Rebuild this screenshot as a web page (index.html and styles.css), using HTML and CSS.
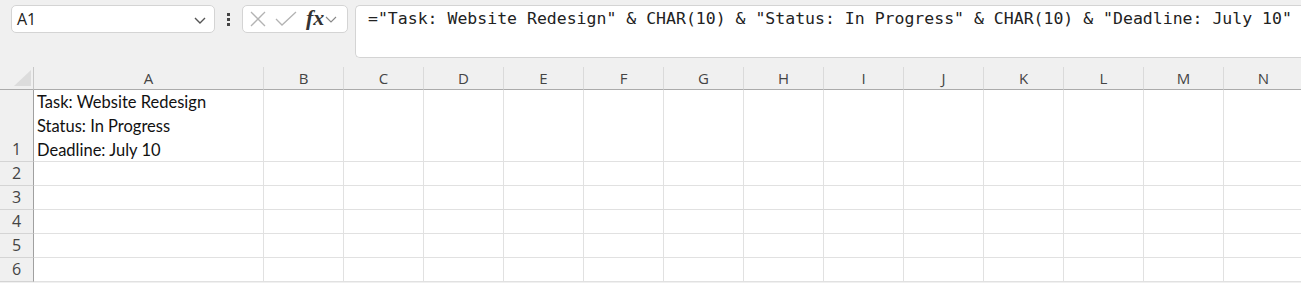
FILE: index.html
```html
<!DOCTYPE html>
<html lang="en">
<head>
    <meta charset="UTF-8">
    <title>Sheet</title>
    <link rel="stylesheet" href="styles.css">
</head>
<body>
    <div class="toolbar">
        <div class="name-box">
            <span>A1</span>
            <svg class="chevron" width="14" height="10" viewBox="0 0 14 10" fill="none" stroke="#555" stroke-width="1.4">
                <polyline points="2 3 7 8 12 3"></polyline>
            </svg>
        </div>
        <div class="dots"><i></i><i></i><i></i></div>
        <div class="func-box">
            <svg width="18" height="18" viewBox="0 0 18 18" fill="none" stroke="#b3b3b3" stroke-width="1.3">
                <line x1="2" y1="2" x2="16" y2="16"></line>
                <line x1="16" y1="2" x2="2" y2="16"></line>
            </svg>
            <svg width="22" height="16" viewBox="0 0 22 16" fill="none" stroke="#b3b3b3" stroke-width="1.3">
                <polyline points="1 8 7 14 21 1"></polyline>
            </svg>
            <span class="fx">fx</span>
            <svg class="small-chevron" width="12" height="8" viewBox="0 0 12 8" fill="none" stroke="#888" stroke-width="1.1">
                <polyline points="1 2 6 7 11 2"></polyline>
            </svg>
        </div>
        <div class="formula">="Task: Website Redesign" &amp; CHAR(10) &amp; "Status: In Progress" &amp; CHAR(10) &amp; "Deadline: July 10"</div>
    </div>

    <div class="sheet">
        <div class="corner"><div class="tri"></div></div>
        <div class="col-head">A</div>
        <div class="col-head">B</div>
        <div class="col-head">C</div>
        <div class="col-head">D</div>
        <div class="col-head">E</div>
        <div class="col-head">F</div>
        <div class="col-head">G</div>
        <div class="col-head">H</div>
        <div class="col-head">I</div>
        <div class="col-head">J</div>
        <div class="col-head">K</div>
        <div class="col-head">L</div>
        <div class="col-head">M</div>
        <div class="col-head">N</div>
    </div>
    <div id="rows"></div>

    <script>
        // build rows 1-6
        const rows = document.getElementById('rows');
        for (let r = 1; r <= 6; r++) {
            const row = document.createElement('div');
            row.className = r === 1 ? 'sheet row tall' : 'sheet row';
            let html = `<div class="row-head">${r}</div>`;
            for (let c = 0; c < 14; c++) {
                if (r === 1 && c === 0) {
                    html += `<div class="cell wrap">Task: Website Redesign<br>Status: In Progress<br>Deadline: July 10</div>`;
                } else {
                    html += `<div class="cell"></div>`;
                }
            }
            row.innerHTML = html;
            rows.appendChild(row);
        }
    </script>
</body>
</html>
```

FILE: styles.css
```css
body {
    margin: 0;
    background: #f0f0f0;
    font-family: 'Open Sans', 'Noto Sans', sans-serif;
    overflow: hidden;
}
.toolbar {
    display: flex;
    align-items: flex-start;
    height: 67px;
    padding: 5px 0 0 11px;
    box-sizing: border-box;
}
.name-box {
    width: 204px;
    height: 28px;
    box-sizing: border-box;
    background: #fff;
    border: 1px solid #d4d4d4;
    border-radius: 5px;
    display: flex;
    align-items: center;
    justify-content: space-between;
    padding: 0 7px 0 5px;
    font-size: 16px;
    color: #222;
}
.chevron {
    margin-top: 2px;
}
.dots {
    width: 27px;
    height: 28px;
    display: flex;
    flex-direction: column;
    align-items: center;
    justify-content: center;
    gap: 2px;
}
.dots i {
    width: 3px;
    height: 3px;
    background: #444;
}
.func-box {
    width: 106px;
    height: 28px;
    box-sizing: border-box;
    background: #fff;
    border: 1px solid #d4d4d4;
    border-radius: 5px;
    display: flex;
    align-items: center;
    padding: 0 4px 0 6px;
    gap: 8px;
}
.fx {
    font-family: 'Liberation Serif', serif;
    font-style: italic;
    font-weight: bold;
    font-size: 22px;
    color: #333;
    margin-left: 1px;
    line-height: 1;
    margin-top: -3px;
}
.small-chevron {
    margin-left: -7px;
}
.formula {
    flex: 1;
    margin-left: 7px;
    height: 53px;
    box-sizing: border-box;
    background: #fff;
    border: 1px solid #d4d4d4;
    border-right: none;
    border-radius: 5px 0 0 5px;
    padding: 3px 0 0 12px;
    font-family: 'DejaVu Sans Mono', monospace;
    font-size: 16.5px;
    color: #222;
    white-space: nowrap;
    overflow: hidden;
}
.sheet {
    display: grid;
    grid-template-columns: 34px 230px repeat(12, 80px) 80px;
}
.corner {
    height: 23px;
    box-sizing: border-box;
    border-right: 1px solid #c8c8c8;
    border-bottom: 1px solid #ababab;
    position: relative;
}
.tri {
    position: absolute;
    right: 2px;
    bottom: 3px;
    width: 0;
    height: 0;
    border-left: 17px solid transparent;
    border-bottom: 16px solid #dcdcdc;
}
.col-head {
    height: 23px;
    box-sizing: border-box;
    border-right: 1px solid #dadada;
    border-bottom: 1px solid #ababab;
    text-align: center;
    font-size: 15px;
    line-height: 22px;
    color: #444;
}
.row {
    background: #fff;
}
.row-head {
    height: 24px;
    box-sizing: border-box;
    background: #f0f0f0;
    border-right: 1px solid #a0a0a0;
    border-bottom: 1px solid #d4d4d4;
    text-align: center;
    font-size: 16px;
    line-height: 24px;
    color: #444;
    display: flex;
    align-items: flex-end;
    justify-content: center;
}
.cell {
    height: 24px;
    box-sizing: border-box;
    border-right: 1px solid #e1e1e1;
    border-bottom: 1px solid #e1e1e1;
}
.tall .row-head,
.tall .cell {
    height: 72px;
}
.wrap {
    font-family: 'Lato', sans-serif;
    font-size: 16.5px;
    line-height: 24px;
    color: #111;
    padding-left: 3px;
    white-space: nowrap;
}
```
